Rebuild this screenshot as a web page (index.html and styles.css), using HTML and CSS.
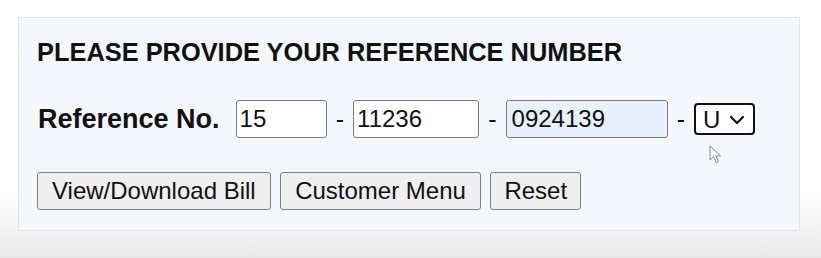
FILE: index.html
```html
<!DOCTYPE html>
<html lang="en">
<head>
<meta charset="utf-8">
<title>Reference Number</title>
<link rel="stylesheet" href="styles.css">
</head>
<body>
<div class="page">
  <form class="panel">
    <h2 class="title">PLEASE PROVIDE YOUR REFERENCE NUMBER</h2>
    <div class="ref-row">
      <label class="ref-label" for="r1">Reference No.</label>
      <input class="field f1" id="r1" type="text" value="15">
      <span class="dash">-</span>
      <input class="field f2" type="text" value="11236">
      <span class="dash">-</span>
      <input class="field f3 autofill" type="text" value="0924139">
      <span class="dash">-</span>
      <div class="select-wrap">
        <select class="sel">
          <option>U</option>
        </select>
        <svg class="chev" width="16" height="10" viewBox="0 0 16 10" aria-hidden="true">
          <path d="M2 2 L8 8 L14 2" fill="none" stroke="#111" stroke-width="2.2" stroke-linecap="round" stroke-linejoin="round"/>
        </svg>
        <svg class="cursor" width="14" height="20" viewBox="0 0 14 20" aria-hidden="true">
          <path d="M1 1 L1 15 L4.5 11.6 L7.2 17.8 L9.4 16.8 L6.8 10.8 L11.6 10.8 Z" fill="#fff" stroke="#8a8a8a" stroke-width="1" stroke-linejoin="round"/>
        </svg>
      </div>
    </div>
    <div class="btn-row">
      <button type="button" class="btn">View/Download Bill</button>
      <button type="button" class="btn">Customer Menu</button>
      <button type="reset" class="btn btn-reset">Reset</button>
    </div>
  </form>
</div>
</body>
</html>
```
FILE: styles.css
```css
html, body {
  margin: 0;
  padding: 0;
}
body {
  width: 821px;
  height: 258px;
  overflow: hidden;
  font-family: "Liberation Sans", Arial, sans-serif;
  color: #111;
  background: linear-gradient(to bottom, #ffffff 0px, #ffffff 190px, #f3f3f3 228px, #e8e8e8 258px);
}
.page {
  padding: 17px 0 0 18px;
}
.panel {
  box-sizing: border-box;
  width: 782px;
  height: 214px;
  margin: 0;
  padding: 20px 18px 0 18px;
  background: #f4f8fc;
  border: 1px solid #dde5ec;
}
.title {
  margin: 0;
  font-size: 25.4px;
  line-height: 28px;
  font-weight: bold;
  color: #111;
}
.ref-row {
  display: flex;
  align-items: center;
  margin-top: 34px;
  height: 38px;
}
.ref-label {
  font-size: 27px;
  font-weight: bold;
  margin-right: 16px;
  margin-left: 1px;
  color: #111;
}
.field {
  box-sizing: border-box;
  height: 38px;
  padding: 0 3px;
  margin: 0;
  font-family: "Liberation Sans", Arial, sans-serif;
  font-size: 24px;
  color: #111;
  background: #fff;
  border: 1px solid #7a7a7a;
  border-radius: 3px;
  outline: none;
}
.f1 { width: 91px; }
.f2 { width: 126px; }
.f3 { width: 162px; }
.autofill {
  background: #e8f0fe;
  padding-left: 5px;
}
.dash {
  width: 26.5px;
  text-align: center;
  font-size: 25px;
  color: #111;
}
.select-wrap {
  position: relative;
  width: 61px;
  height: 32px;
}
.sel {
  -webkit-appearance: none;
  appearance: none;
  box-sizing: border-box;
  width: 61px;
  height: 32px;
  margin: 0;
  padding: 0 0 0 7px;
  font-family: "Liberation Sans", Arial, sans-serif;
  font-size: 24px;
  color: #111;
  background: #fff;
  border: 2px solid #111;
  border-radius: 4px;
  outline: none;
}
.chev {
  position: absolute;
  left: 35px;
  top: 12px;
  pointer-events: none;
}
.cursor {
  position: absolute;
  left: 15px;
  top: 42px;
  pointer-events: none;
}
.btn-row {
  display: flex;
  gap: 9.5px;
  margin-top: 34px;
}
.btn {
  box-sizing: border-box;
  height: 38px;
  margin: 0;
  padding: 0 14px;
  font-family: "Liberation Sans", Arial, sans-serif;
  font-size: 24px;
  color: #111;
  background: #efefef;
  border: 1px solid #7f7f7f;
  border-radius: 3px;
}
.btn-reset {
  padding: 0 13px;
}
```
